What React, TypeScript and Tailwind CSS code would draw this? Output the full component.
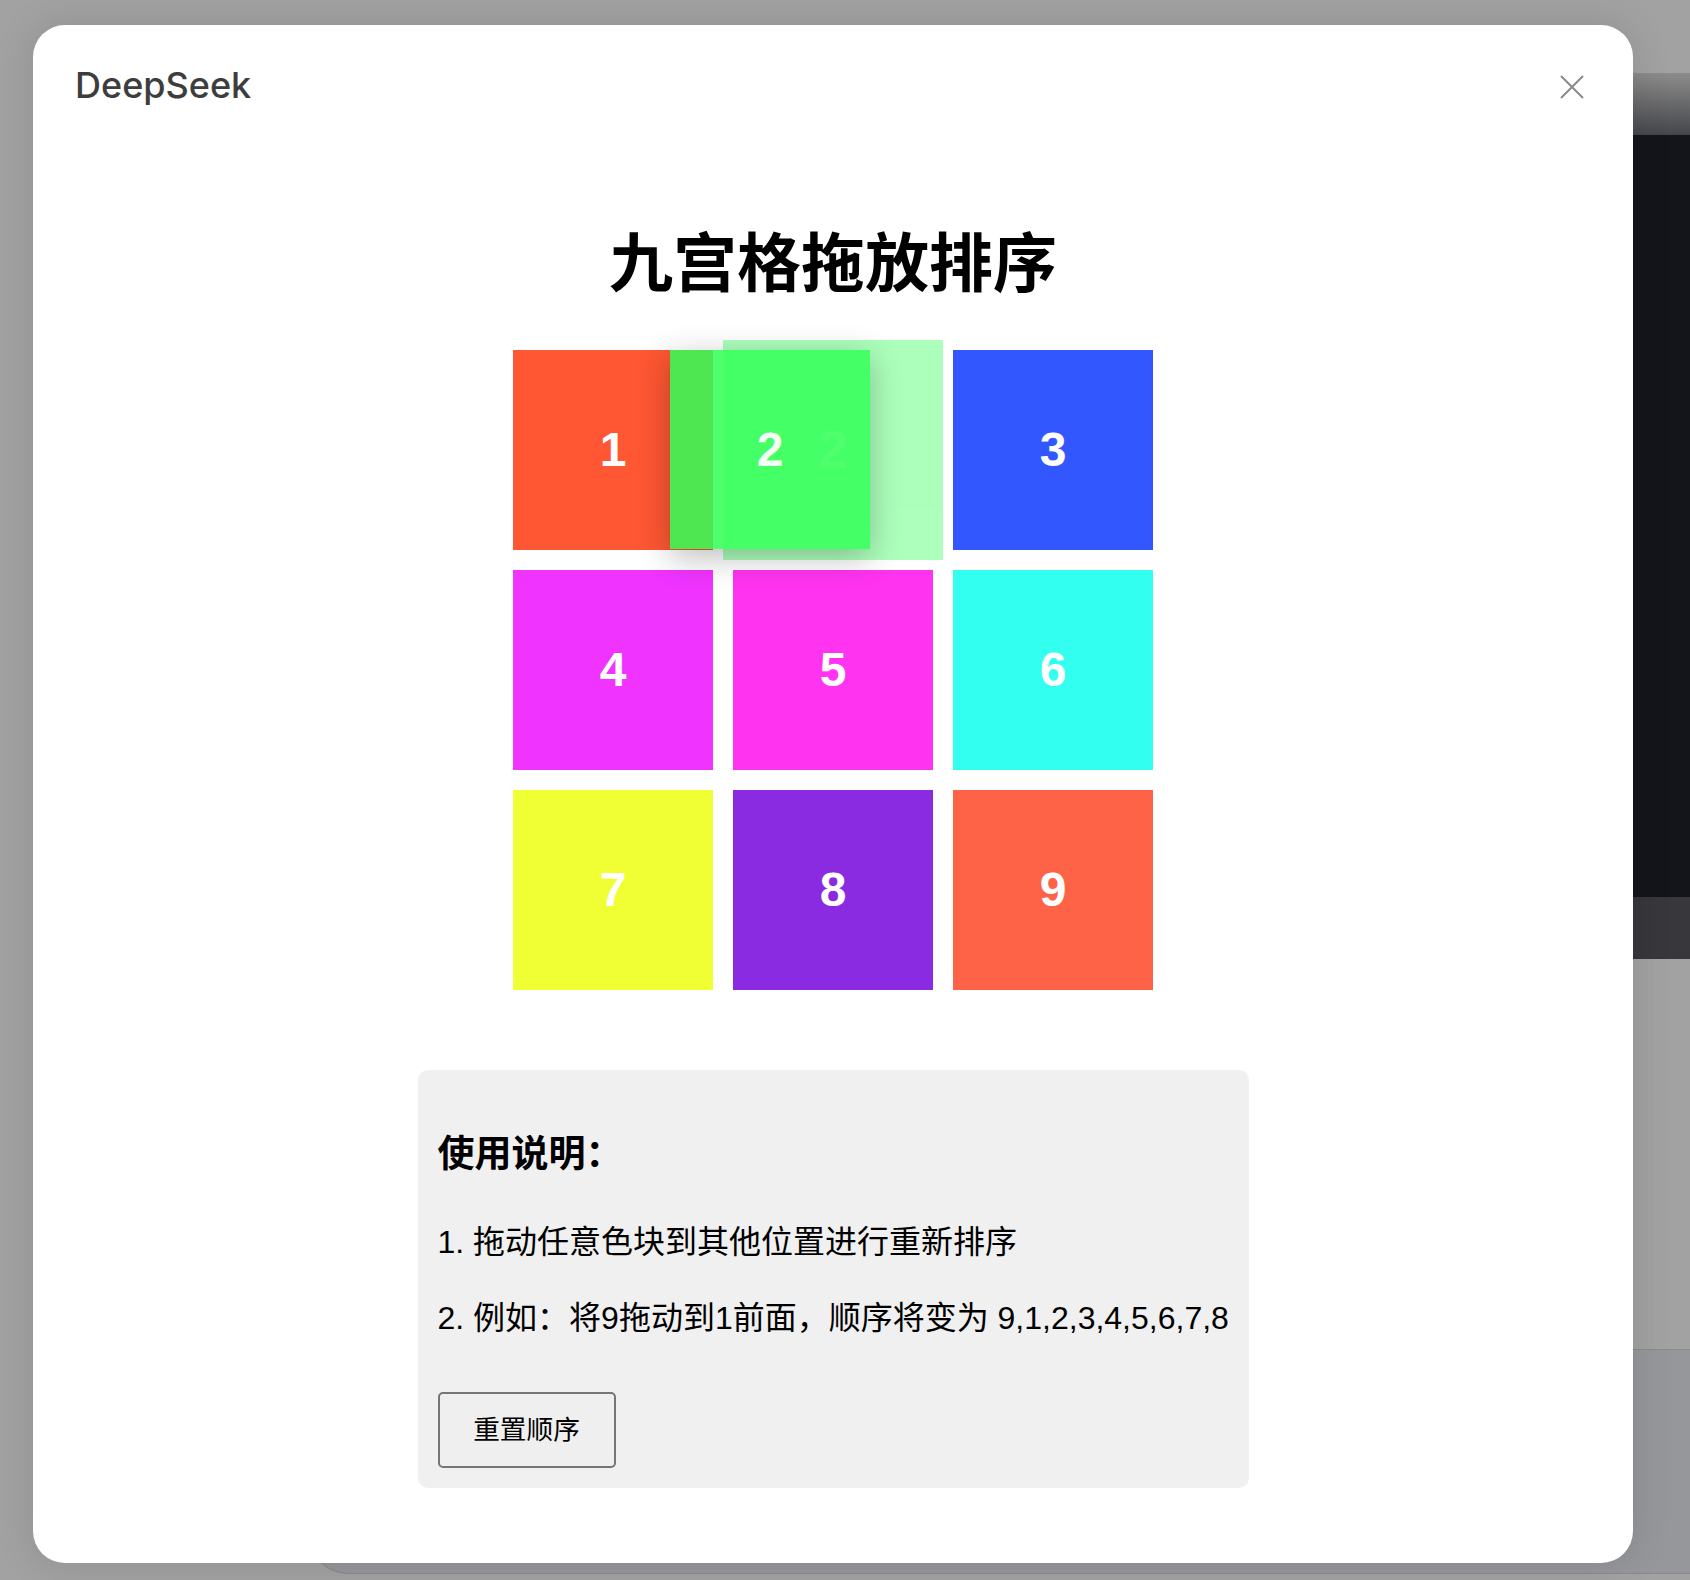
import React from "react";

const tiles = [
  { n: 1, color: "bg-[#ff5733]" },
  { n: 2, color: "bg-[#33ff57]" },
  { n: 3, color: "bg-[#3357ff]" },
  { n: 4, color: "bg-[#f033ff]" },
  { n: 5, color: "bg-[#ff33f0]" },
  { n: 6, color: "bg-[#33fff0]" },
  { n: 7, color: "bg-[#f0ff33]" },
  { n: 8, color: "bg-[#8a2be2]" },
  { n: 9, color: "bg-[#ff6347]" },
];

const font = "font-['Liberation_Sans','Noto_Sans_CJK_SC',sans-serif]";

const Backdrop = () => (
  <div className="flex h-full w-full flex-col bg-[#a2a2a2]">
    <div className="flex h-[1349px]">
      <div className="flex-1" />
      <div className="flex w-[200px] flex-col">
        <div className="h-[73px]" />
        <div className="h-[62px] bg-[linear-gradient(180deg,#8c8c8c,#45464b)]" />
        <div className="h-[762px] bg-[#13151b]" />
        <div className="h-[62px] bg-[#37373c]" />
        <div className="flex-1" />
      </div>
    </div>
    <div className="flex h-[231px]">
      <div className="w-[308px]" />
      <div className="h-[225px] flex-1 rounded-bl-[40px] border-t border-b border-l border-[#8a8b8f] bg-[#96979a]" />
    </div>
  </div>
);

const Tile = ({ n, color }: { n: number; color: string }) => (
  <div
    className={`flex h-[200px] w-[200px] items-center justify-center text-[48px] leading-none font-bold text-white ${color}`}
  >
    {n}
  </div>
);

export default function App() {
  return (
    <div className={`relative h-[1580px] w-[1690px] overflow-hidden ${font}`}>
      <Backdrop />

      <div className="absolute left-[33px] top-[25px] flex h-[1538px] w-[1600px] flex-col rounded-[32px] bg-white shadow-[0_0_40px_rgba(0,0,0,0.12)]">
        <div className="flex items-start justify-between pl-[42px] pr-[49px] pt-[42px]">
          <span className="font-['Inter',sans-serif] text-[36px] leading-[36px] font-medium text-[#3d3d3d]">
            DeepSeek
          </span>
          <svg className="mt-[8px]" width="24" height="24" viewBox="0 0 24 24" fill="none">
            <path d="M1 1L23 23M23 1L1 23" stroke="#8a8a8a" strokeWidth="2" />
          </svg>
        </div>

        <h1 className="mt-[129px] text-center text-[64px] leading-[64px] font-bold text-black">
          九宫格拖放排序
        </h1>

        <div className="relative mx-auto mt-[54px] grid w-[640px] grid-cols-3 gap-[20px]">
          {tiles.map((t) =>
            t.n === 2 ? (
              <div
                key={t.n}
                className={`flex h-[200px] w-[200px] scale-110 items-center justify-center text-[48px] leading-none font-bold text-white opacity-40 ${t.color}`}
              >
                {t.n}
              </div>
            ) : (
              <Tile key={t.n} n={t.n} color={t.color} />
            )
          )}
          {/* drag image */}
          <div className="absolute left-[157px] top-0 z-10 flex h-[199px] w-[200px] items-center justify-center bg-[#33ff57] text-[48px] leading-none font-bold text-white opacity-[0.86] shadow-[0_8px_30px_rgba(0,0,0,0.3)]">
            2
          </div>
        </div>

        <div className="mx-auto mt-[80px] w-[831px] rounded-[10px] bg-[#f0f0f0] px-[20px] pt-[20px] pb-[20px] text-black">
          <h3 className="mt-[43px] text-[37px] leading-[44px] font-bold">使用说明：</h3>
          <p className="mt-[45px] text-[32px] leading-[40px] whitespace-nowrap">
            1. 拖动任意色块到其他位置进行重新排序
          </p>
          <p className="mt-[36px] text-[32px] leading-[40px] whitespace-nowrap">
            2. 例如：将9拖动到1前面，顺序将变为 9,1,2,3,4,5,6,7,8
          </p>
          <button className="mt-[54px] flex h-[76px] w-[178px] items-center justify-center rounded-[5px] border-2 border-[#767676] bg-[#efefef] text-[26.67px] leading-none text-black">
            重置顺序
          </button>
        </div>
      </div>
    </div>
  );
}
